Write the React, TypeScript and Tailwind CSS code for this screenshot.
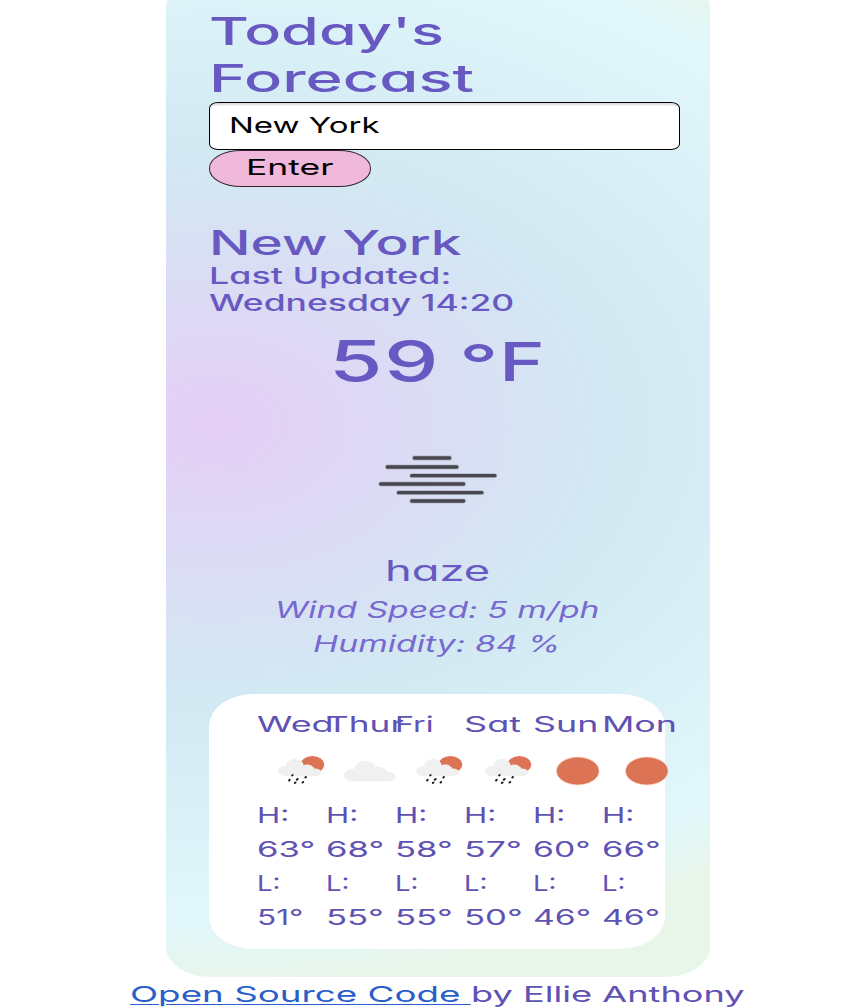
import { useLayoutEffect, useRef, type ReactNode } from "react";

/* Stretches a single line of text horizontally to fill its box. */
function Fit({ className, children }: { className: string; children: ReactNode }) {
  const box = useRef<HTMLSpanElement>(null);
  const text = useRef<HTMLSpanElement>(null);
  useLayoutEffect(() => {
    const fit = () => {
      if (box.current && text.current) {
        const ratio = box.current.clientWidth / text.current.offsetWidth;
        text.current.style.transform = `scaleX(${ratio})`;
      }
    };
    fit();
    document.fonts.ready.then(fit);
  }, []);
  return (
    <span ref={box} className={`flex shrink-0 items-center ${className}`}>
      <span ref={text} className="inline-block shrink-0 origin-left whitespace-pre">
        {children}
      </span>
    </span>
  );
}

function RainIcon() {
  return (
    <svg viewBox="0 0 66 48" className="h-12 w-[66px] shrink-0">
      <ellipse cx="43.4" cy="17.6" rx="11.8" ry="8.6" fill="#dc7354" />
      <g fill="#f0f0f0">
        <ellipse cx="16.2" cy="24" rx="7" ry="5.1" />
        <ellipse cx="26" cy="18.4" rx="8.6" ry="6.3" />
        <ellipse cx="38.3" cy="22.6" rx="6.6" ry="5.1" />
        <ellipse cx="45.6" cy="25.4" rx="7" ry="3.8" />
        <rect x="16" y="20" width="29" height="9.1" rx="1" />
      </g>
      <g stroke="#1c1c1c" strokeWidth="2" strokeLinecap="round">
        <path d="M23.6 28l-.4 .5M20.7 32.8l-.6 .7M28.7 32l-.9 .8M26.6 35.5l-.7 .4M36.9 30l-.5 .5M34.2 35l-.6 .5" />
      </g>
    </svg>
  );
}

function CloudIcon() {
  return (
    <svg viewBox="0 0 66 48" className="h-12 w-[66px] shrink-0">
      <path
        fill="#f0f0f0"
        d="M14 34.3H50.500C55 34.300 57.600 32.200 57.600 29.700C57.600 27 54.500 25 49.800 25.100C48.500 21.600 43.500 18.900 37.300 20C35.600 16 31.500 13.700 27 13.700C21 13.700 16.600 17.300 16.600 21.700C10.500 21.600 6.200 24.500 6.200 28.400C6.200 31.800 9.500 34.300 14 34.300Z"
      />
    </svg>
  );
}

function SunIcon() {
  return (
    <svg viewBox="0 0 66 48" className="h-12 w-[66px] shrink-0">
      <ellipse cx="32.8" cy="24" rx="21.3" ry="13.9" fill="#dc7354" stroke="#f6cfb8" strokeWidth="0.7" />
    </svg>
  );
}

function HazeIcon() {
  return (
    <svg viewBox="0 0 130 60" className="h-[60px] w-[130px]">
      <g stroke="#48474d" strokeLinecap="round">
        <path strokeOpacity="0.25" strokeWidth="4.8" d="M42.3 9H77.7M15.3 18H84.9M39.7 26.7H122.9M8.7 35H91.7M26.500 43.700H109.900M39.700 52H91.700" />
        <path strokeWidth="3.3" d="M42.3 9H77.7M15.3 18H84.9M39.7 26.7H122.9M8.7 35H91.7M26.500 43.700H109.900M39.700 52H91.700" />
      </g>
    </svg>
  );
}

const days = [
  { name: "Wed", width: "w-[77px]", icon: <RainIcon />, high: 63, low: 51, lowWidth: "w-[47px]" },
  { name: "Thur", width: "w-[77px]", icon: <CloudIcon />, high: 68, low: 55, lowWidth: "w-[58px]" },
  { name: "Fri", width: "w-[39px]", icon: <RainIcon />, high: 58, low: 55, lowWidth: "w-[58px]" },
  { name: "Sat", width: "w-[57px]", icon: <RainIcon />, high: 57, low: 50, lowWidth: "w-[58px]" },
  { name: "Sun", width: "w-[65px]", icon: <SunIcon />, high: 60, low: 46, lowWidth: "w-[58px]" },
  { name: "Mon", width: "w-[75px]", icon: <SunIcon />, high: 66, low: 46, lowWidth: "w-[58px]" },
];

export default function App() {
  return (
    <div className="flex h-[1008px] w-[864px] flex-col overflow-hidden bg-white font-['Inter',sans-serif] text-[#6759c1] [font-feature-settings:'cv11']">
      <main className="-mt-[22px] ml-[165.6px] h-[999px] w-[544px] shrink-0 rounded-[45px/30px] bg-[radial-gradient(ellipse_900px_600px_at_48px_447px,#e5cef6_0%,#d2e9f3_45%,#e1f7fb_83%,#e8f5e9_93%)] pt-[29.5px] pl-[43.8px]">
        <h1 className="text-[38px] leading-[47px] font-[550]">
          <Fit className="h-[47px] w-[235px]">Today's</Fit>
          <Fit className="h-[47px] w-[265px]">Forecast</Fit>
        </h1>
        <form className="mt-[0.5px] text-black" onSubmit={(e) => e.preventDefault()}>
          <div className="flex h-12 w-[471px] items-center rounded-[9px/6px] border-x-[1.5px] border-y border-black bg-white pb-0.5 pl-[18.5px] shadow-[inset_0_3px_2px_-1px_#ddd6de]">
            <Fit className="w-[150px] text-[22px]">New York</Fit>
          </div>
          <button className="flex h-[37px] w-[162px] items-center rounded-[32px/18px] border border-[#33222e] bg-[#f0b8da] pb-0.5 pl-[35.5px]">
            <Fit className="w-[87px] text-[22px]">Enter</Fit>
          </button>
        </form>
        <section className="mt-[35.500px]">
          <h2 className="text-[34px] font-[550]">
            <Fit className="h-10 w-[252px]">New York</Fit>
          </h2>
          <div className="text-[22.5px] font-[450]">
            <Fit className="h-[27px] w-[242px]">Last Updated:</Fit>
            <Fit className="h-[27px] w-[306px]">Wednesday 14:20</Fit>
          </div>
        </section>
        <section className="flex w-[456px] flex-col items-center">
          <div className="flex h-[90px] items-center text-[54px] font-[550]">
            <Fit className="w-[111px] text-[57px] tracking-[1px]">59</Fit>
            <Fit className="mt-1 ml-[19px] w-[40px]">°</Fit>
            <Fit className="w-[46px]">F</Fit>
          </div>
          <div className="flex h-36 items-center">
            <HazeIcon />
          </div>
          <div className="text-[28px]">
            <Fit className="h-10 w-[105px]">haze</Fit>
          </div>
          <div className="mt-0.5 flex flex-col items-center text-[22.5px] text-[#7769cf] italic">
            <Fit className="h-[34px] w-[325px]">Wind Speed: 5 m/ph</Fit>
            <Fit className="h-[34px] w-[248px]">Humidity: 84 %</Fit>
          </div>
        </section>
        <section className="mt-[33.500px] flex h-[254.5px] w-[456px] rounded-[45px/32px] bg-white pt-[13.5px] pl-[47.8px] text-[21.5px] text-[#6052b2]">
          {days.map((day) => (
            <div key={day.name} className="w-[68.9px] shrink-0">
              <Fit className={`h-[34px] ${day.width}`}>{day.name}</Fit>
              <div className="ml-3 flex h-[57px] items-center pt-0.5">{day.icon}</div>
              <Fit className="h-[34px] w-[32px]">H:</Fit>
              <Fit className="h-[34px] w-[58px]">{day.high}°</Fit>
              <Fit className="h-[34px] w-[23px]">L:</Fit>
              <Fit className={`h-[34px] ${day.lowWidth}`}>{day.low}°</Fit>
            </div>
          ))}
        </section>
      </main>
      <footer className="mt-[3.500px] ml-[130px] flex h-[27px] shrink-0 items-center text-[22px] text-[#6052b2]">
        <a href="#" className="text-[#2a5fc9]">
          <Fit className="w-[341px] underline decoration-[1.2px] underline-offset-[2px]">{"Open Source Code "}</Fit>
        </a>
        <Fit className="w-[273px]">by Ellie Anthony</Fit>
      </footer>
    </div>
  );
}
